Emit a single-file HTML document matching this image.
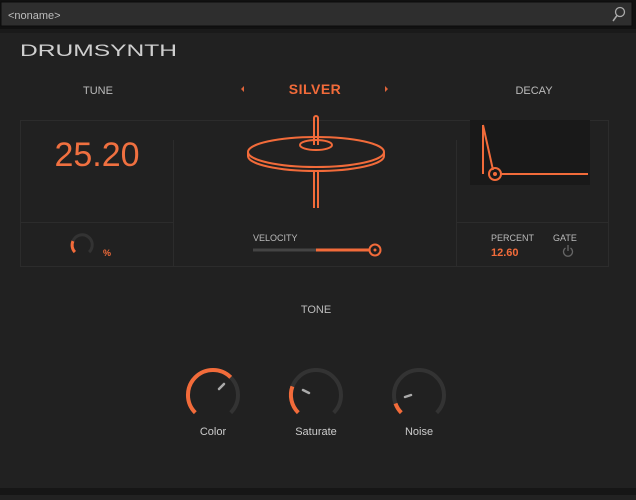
<!DOCTYPE html>
<html><head><style>
body{margin:0;width:636px;height:495px;background:#222;overflow:hidden;font-family:"Liberation Sans",sans-serif}
</style></head><body>
<svg width="636" height="495" viewBox="0 0 636 495" xmlns="http://www.w3.org/2000/svg" font-family="Liberation Sans, sans-serif">
<rect width="636" height="495" fill="#212121"/>
<rect x="0" y="0" width="636" height="29" fill="#111"/>
<rect x="1" y="2" width="631" height="24" fill="#2e2e2e" stroke="#0c0c0c"/>
<text x="8" y="19" font-size="11" fill="#bdbdbd">&lt;noname&gt;</text>
<circle cx="620" cy="12" r="4.5" fill="none" stroke="#aaa" stroke-width="1.3"/>
<line x1="617" y1="15.5" x2="613" y2="21" stroke="#aaa" stroke-width="1.5"/>
<rect x="0" y="29" width="636" height="4" fill="#1a1a1a"/>
<rect x="0" y="488" width="636" height="7" fill="#161616"/>
<text x="20" y="56" font-size="17" fill="#cfcfcf" textLength="157" lengthAdjust="spacingAndGlyphs" font-weight="300">DRUMSYNTH</text>
<text x="98" y="94" font-size="11" fill="#bbb" text-anchor="middle">TUNE</text>
<text x="534" y="94" font-size="11" fill="#bbb" text-anchor="middle">DECAY</text>
<text x="315" y="94" font-size="14" fill="#f26b3a" text-anchor="middle" font-weight="bold" letter-spacing="0.5">SILVER</text>
<path d="M244 86 l-3 3 l3 3z M385 86 l3 3 l-3 3z" fill="#e0643a"/>
<rect x="20.5" y="120.5" width="588" height="146" fill="none" stroke="#2c2c2c"/>
<line x1="173.5" y1="140" x2="173.5" y2="267" stroke="#2c2c2c"/>
<line x1="456.5" y1="140" x2="456.5" y2="267" stroke="#2c2c2c"/>
<line x1="20" y1="222.5" x2="173" y2="222.5" stroke="#2c2c2c"/>
<line x1="456" y1="222.5" x2="609" y2="222.5" stroke="#2c2c2c"/>
<text x="97" y="166" font-size="34" fill="#f07040" text-anchor="middle" font-weight="300">25.20</text>
<path d="M74.9 252.1 A10 10 0 0 1 73 241" fill="none" stroke="#f26b3a" stroke-width="3"/>
<path d="M73 241 A10 10 0 1 1 89.1 252.1" fill="none" stroke="#333" stroke-width="3"/>
<text x="103" y="256" font-size="9" fill="#f26b3a" font-weight="bold">%</text>
<g fill="#212121" stroke="#f26b3a" stroke-width="2">
<line x1="314" y1="170" x2="314" y2="208"/><line x1="318" y1="170" x2="318" y2="208"/>
<path d="M248 152 v4 a68 15 0 0 0 136 0 v-4"/>
<ellipse cx="316" cy="152" rx="68" ry="15"/>
<ellipse cx="316" cy="145" rx="16" ry="5"/>
<path d="M314 145 V118 a2 2 0 0 1 4 0 V145" fill="none"/>
</g>
<text x="253" y="241" font-size="9" fill="#bbb">VELOCITY</text>
<line x1="253" y1="250" x2="316" y2="250" stroke="#444" stroke-width="3"/>
<line x1="316" y1="250" x2="370" y2="250" stroke="#f26b3a" stroke-width="3"/>
<circle cx="375" cy="250" r="5.5" fill="#1f1f1f" stroke="#f26b3a" stroke-width="2"/>
<circle cx="375" cy="250" r="1.5" fill="#f26b3a"/>
<rect x="470" y="120" width="120" height="65" fill="#191919"/>
<g stroke="#f26b3a" stroke-width="2" fill="none">
<line x1="483" y1="125" x2="483" y2="174"/>
<line x1="483" y1="125" x2="493" y2="170"/>
<line x1="500" y1="174" x2="588" y2="174"/>
<circle cx="495" cy="174" r="6"/>
</g>
<circle cx="495" cy="174" r="2" fill="#f26b3a"/>
<text x="491" y="241" font-size="9" fill="#bbb">PERCENT</text>
<text x="553" y="241" font-size="9" fill="#bbb">GATE</text>
<text x="491" y="256" font-size="11" fill="#f26b3a" font-weight="bold">12.60</text>
<path d="M565.5 248 a4.5 4.5 0 1 0 5 0" fill="none" stroke="#666" stroke-width="1.3"/>
<line x1="568" y1="245" x2="568" y2="251" stroke="#666" stroke-width="1.3"/>
<text x="316" y="313" font-size="11" fill="#bbb" text-anchor="middle">TONE</text>
<g fill="none" stroke-width="4">
<path d="M195.3 412.7 A25 25 0 1 1 230.7 412.7" stroke="#333"/>
<path d="M195.3 412.7 A25 25 0 0 1 230.7 377.3" stroke="#f26b3a"/>
<path d="M298.3 412.7 A25 25 0 1 1 333.7 412.7" stroke="#333"/>
<path d="M298.3 412.7 A25 25 0 0 1 292.4 386.4" stroke="#f26b3a"/>
<path d="M401.3 412.7 A25 25 0 1 1 436.7 412.7" stroke="#333"/>
<path d="M401.3 412.7 A25 25 0 0 1 395.5 403.5" stroke="#f26b3a"/>
</g>
<g stroke="#aaa" stroke-width="2.5" stroke-linecap="round">
<line x1="219" y1="389" x2="224" y2="384"/>
<line x1="303" y1="390" x2="309" y2="393"/>
<line x1="405" y1="397" x2="411" y2="395"/>
</g>
<g font-size="11" fill="#ccc" text-anchor="middle">
<text x="213" y="435">Color</text>
<text x="316" y="435">Saturate</text>
<text x="419" y="435">Noise</text>
</g>
</svg>
</body></html>
